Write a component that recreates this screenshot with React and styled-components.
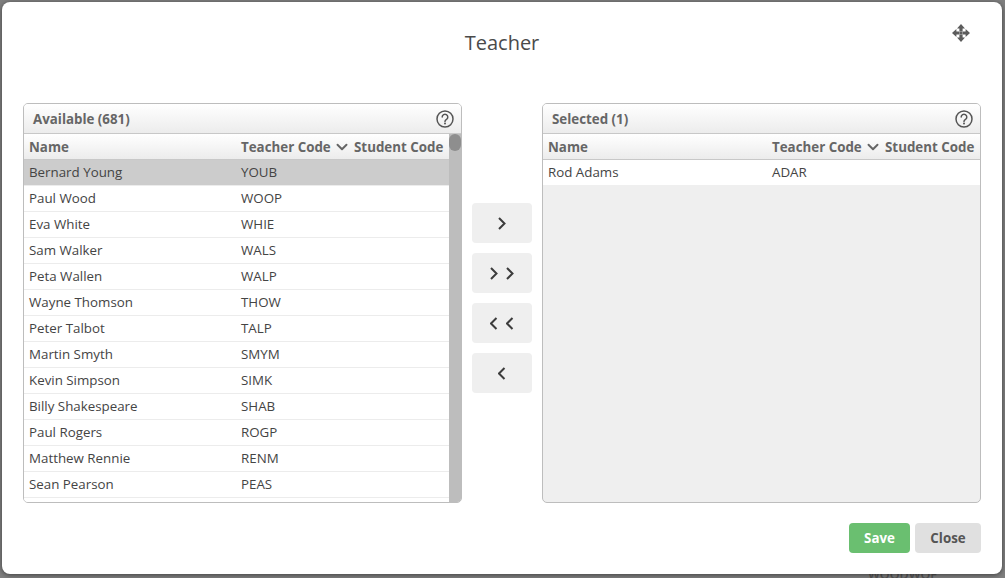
import React from "react";
import styled, { createGlobalStyle } from "styled-components";
import { FiChevronDown } from "react-icons/fi";

const availableRows = [
  ["Bernard Young", "YOUB"],
  ["Paul Wood", "WOOP"],
  ["Eva White", "WHIE"],
  ["Sam Walker", "WALS"],
  ["Peta Wallen", "WALP"],
  ["Wayne Thomson", "THOW"],
  ["Peter Talbot", "TALP"],
  ["Martin Smyth", "SMYM"],
  ["Kevin Simpson", "SIMK"],
  ["Billy Shakespeare", "SHAB"],
  ["Paul Rogers", "ROGP"],
  ["Matthew Rennie", "RENM"],
  ["Sean Pearson", "PEAS"],
];

const selectedRows = [["Rod Adams", "ADAR"]];

function HelpIcon() {
  return (
    <svg width="18" height="18" viewBox="0 0 18 18" fill="none" stroke="#555" strokeWidth="1.5">
      <circle cx="9" cy="9" r="8" />
      <path d="M6.2 7a2.8 2.8 0 1 1 4.3 2.4c-1 .6-1.5 1-1.5 2.1" strokeLinecap="round" />
      <circle cx="9" cy="13.6" r="1" fill="#555" stroke="none" />
    </svg>
  );
}

function MoveIcon() {
  return (
    <svg width="18" height="18" viewBox="0 0 18 18" fill="#5c5c5c">
      <path d="M9 0 13 4.4H10.6V7.2H7.4V4.4H5Z" />
      <path d="M9 18 13 13.6H10.6V10.8H7.4V13.6H5Z" />
      <path d="M0 9 4.4 5V7.4H7.2V10.6H4.4V13Z" />
      <path d="M18 9 13.6 5V7.4H10.8V10.6H13.6V13Z" />
      <rect x="7.4" y="7.4" width="3.2" height="3.2" />
    </svg>
  );
}

function Chevrons({ dir, count }) {
  const d = dir === "right" ? "M1 1 6.5 6.5 1 12" : "M6.5 1 1 6.5 6.5 12";
  return (
    <ChevronGroup>
      {Array.from({ length: count }).map((_, i) => (
        <svg key={i} width="8" height="13" viewBox="0 0 8 13" fill="none" stroke="#3c3c3c" strokeWidth="2">
          <path d={d} />
        </svg>
      ))}
    </ChevronGroup>
  );
}

function ListPanel({ title, rows, scroll }) {
  return (
    <Panel>
      <PanelHeader>
        <PanelTitle>{title}</PanelTitle>
        <HelpIcon />
      </PanelHeader>
      <PanelBody>
        <TableArea $white={scroll}>
          <HeadRow>
            <span>Name</span>
            <CodeCell>
              Teacher Code
              <SortIcon />
            </CodeCell>
            <span>Student Code</span>
          </HeadRow>
          {rows.map((row, i) => (
            <Row key={row[1]} $active={scroll && i === 0} $plain={!scroll}>
              <span>{row[0]}</span>
              <CodeCell>{row[1]}</CodeCell>
            </Row>
          ))}
        </TableArea>
        {scroll && (
          <ScrollTrack>
            <ScrollThumb />
          </ScrollTrack>
        )}
      </PanelBody>
    </Panel>
  );
}

export default function App() {
  return (
    <>
      <GlobalStyle />
      <Backdrop>
        <GhostText>WOODWOF</GhostText>
        <Dialog>
          <TitleBar>
            <Title>Teacher</Title>
            <MoveHandle>
              <MoveIcon />
            </MoveHandle>
          </TitleBar>
          <Content>
            <ListPanel title="Available (681)" rows={availableRows} scroll />
            <ButtonColumn>
              <MoveButton><Chevrons dir="right" count={1} /></MoveButton>
              <MoveButton><Chevrons dir="right" count={2} /></MoveButton>
              <MoveButton><Chevrons dir="left" count={2} /></MoveButton>
              <MoveButton><Chevrons dir="left" count={1} /></MoveButton>
            </ButtonColumn>
            <ListPanel title="Selected (1)" rows={selectedRows} />
          </Content>
          <Footer>
            <SaveButton>Save</SaveButton>
            <CloseButton>Close</CloseButton>
          </Footer>
        </Dialog>
      </Backdrop>
    </>
  );
}

const GlobalStyle = createGlobalStyle`
  html, body { margin: 0; padding: 0; }
  body { font-family: "Open Sans", "Liberation Sans", sans-serif; overflow: hidden; }
`;

const Backdrop = styled.div`
  position: relative;
  width: 1005px;
  height: 578px;
  padding: 2px 3px 4px 2px;
  box-sizing: border-box;
  background: #7f7f7f;
  overflow: hidden;
`;

const GhostText = styled.div`
  position: absolute;
  left: 868px;
  top: 566px;
  font-size: 12.5px;
  font-weight: 600;
  color: #555;
`;

const Dialog = styled.div`
  position: relative;
  height: 572px;
  box-sizing: border-box;
  padding: 0 21px;
  background: #fff;
  border-radius: 8px;
  box-shadow: 0 1px 5px rgba(0, 0, 0, 0.5);
  display: flex;
  flex-direction: column;
`;

const TitleBar = styled.div`
  position: relative;
  height: 101px;
  flex: none;
`;

const Title = styled.h2`
  margin: 0;
  padding-top: 27px;
  text-align: center;
  font-size: 20px;
  line-height: 28px;
  font-weight: 400;
  color: #4a4a4a;
`;

const MoveHandle = styled.div`
  position: absolute;
  right: 11px;
  top: 22px;
  width: 18px;
  height: 18px;
`;

const Content = styled.div`
  display: grid;
  grid-template-columns: 439px 1fr 439px;
  height: 400px;
  flex: none;
`;

const Panel = styled.section`
  box-sizing: border-box;
  border: 1px solid #bdbdbd;
  border-radius: 5px;
  background: #efefef;
  overflow: hidden;
  display: flex;
  flex-direction: column;
`;

const PanelHeader = styled.header`
  flex: none;
  height: 30px;
  box-sizing: border-box;
  padding: 0 7px 0 9px;
  display: flex;
  align-items: center;
  justify-content: space-between;
  background: linear-gradient(#ffffff, #ececec);
  border-bottom: 1px solid #c8c8c8;
`;

const PanelTitle = styled.span`
  font-size: 13.33px;
  font-weight: 700;
  color: #666;
`;

const PanelBody = styled.div`
  flex: 1;
  min-height: 0;
  display: flex;
`;

const TableArea = styled.div`
  flex: 1;
  min-width: 0;
  background: ${(p) => (p.$white ? "#fff" : "transparent")};
`;

const HeadRow = styled.div`
  height: 26px;
  box-sizing: border-box;
  display: grid;
  grid-template-columns: 1fr 113px 95px;
  align-items: center;
  padding-left: 5px;
  background: linear-gradient(#ffffff, #ececec);
  border-bottom: 1px solid #c8c8c8;
  font-size: 13.33px;
  font-weight: 700;
  color: #666;
  white-space: nowrap;
`;

const Row = styled.div`
  height: ${(p) => (p.$plain ? "25px" : "26px")};
  box-sizing: border-box;
  display: grid;
  grid-template-columns: 1fr 113px 95px;
  align-items: center;
  padding: ${(p) => (p.$plain ? "0 0 1px 5px" : "0 0 2px 5px")};
  font-size: 13.33px;
  color: #444;
  white-space: nowrap;
  background: ${(p) => (p.$active ? "#cccccc" : "#fff")};
  border-bottom: ${(p) => (p.$plain ? "none" : "1px solid #ececec")};
`;

const CodeCell = styled.span`
  display: flex;
  align-items: center;
`;

const SortIcon = styled(FiChevronDown)`
  width: 18px;
  height: 18px;
  margin-left: 2px;
  stroke-width: 2.6;
  color: #666;
`;

const ScrollTrack = styled.div`
  flex: none;
  width: 12px;
  background: #bdbdbd;
`;

const ScrollThumb = styled.div`
  width: 12px;
  height: 17px;
  background: #8e8e8e;
  border-radius: 6px;
`;

const ButtonColumn = styled.div`
  display: flex;
  flex-direction: column;
  align-items: center;
  justify-content: center;
  gap: 10px;
  padding-bottom: 10px;
`;

const MoveButton = styled.button`
  width: 60px;
  height: 40px;
  padding: 0;
  border: none;
  border-radius: 4px;
  background: #efefef;
  display: flex;
  align-items: center;
  justify-content: center;
`;

const ChevronGroup = styled.span`
  display: flex;
  gap: 8px;
`;

const Footer = styled.footer`
  display: flex;
  justify-content: flex-end;
  gap: 5px;
  padding-top: 20px;
`;

const SaveButton = styled.button`
  width: 61px;
  height: 30px;
  padding: 0;
  border: none;
  border-radius: 4px;
  background: #6abf70;
  color: #fff;
  font-family: inherit;
  font-size: 13.33px;
  font-weight: 700;
`;

const CloseButton = styled(SaveButton)`
  width: 66px;
  background: #e0e0e0;
  color: #555;
`;
